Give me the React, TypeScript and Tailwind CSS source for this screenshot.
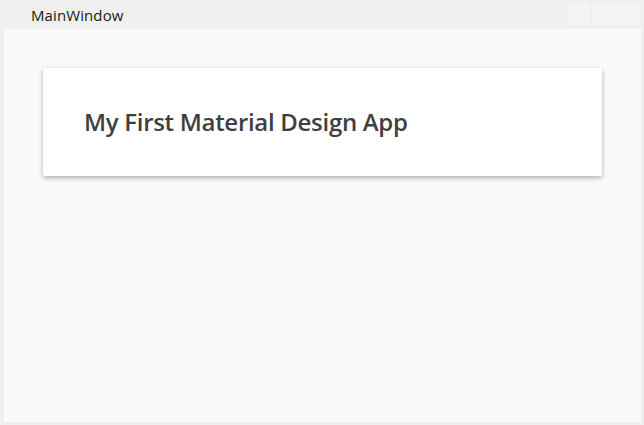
export default function App() {
  return (
    <div className="w-[644px] h-[425px] bg-[#efefef] flex flex-col overflow-hidden" style={{ fontFamily: '"Open Sans", "Noto Sans", sans-serif' }}>
      <div className="h-[29px] flex items-start shrink-0">
        <div className="pl-[31px] pt-[4px] text-[15px] leading-[22px] text-[#1a1a1a] tracking-[0.1px]">MainWindow</div>
        <div className="ml-auto flex gap-[2px] pt-[3px] pr-[4px]">
          <div className="w-[22px] h-[22px] bg-[#f4f4f4]" />
          <div className="w-[23px] h-[22px] bg-[#f4f4f4]" />
          <div className="w-[23px] h-[22px] bg-[#f4f4f4]" />
        </div>
      </div>
      <div className="ml-[4px] mr-[3px] h-[393px] bg-[#fafafa] pt-[39px] pl-[39px] pr-[39px]">
        <div className="w-[559px] h-[108px] bg-white rounded-[2px] shadow-[0_2px_5px_rgba(0,0,0,0.3)] flex items-center pl-[41px]">
          <span className="text-[24px] font-semibold text-[#3f3f3f] tracking-[-0.3px]">My First Material Design App</span>
        </div>
      </div>
    </div>
  );
}
